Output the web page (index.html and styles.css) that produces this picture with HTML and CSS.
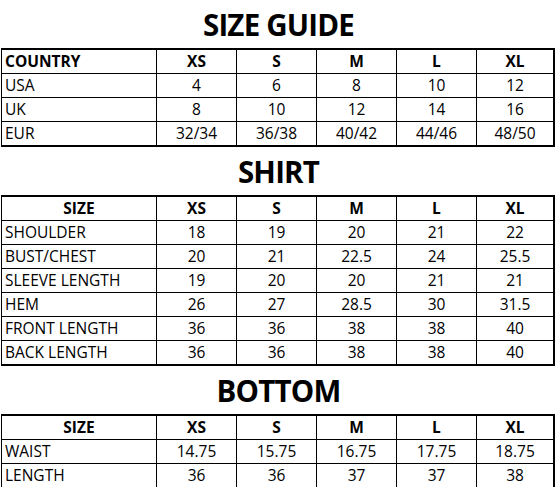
FILE: index.html
```html
<!DOCTYPE html>
<html lang="en">
<head>
<meta charset="utf-8">
<title>Size Guide</title>
<link rel="stylesheet" href="styles.css">
</head>
<body>
<main class="guide">
  <section class="block">
    <h2 class="title">SIZE GUIDE</h2>
    <div class="chart">
      <div class="c head first left">COUNTRY</div><div class="c head">XS</div><div class="c head">S</div><div class="c head">M</div><div class="c head">L</div><div class="c head">XL</div>
      <div class="c left">USA</div><div class="c">4</div><div class="c">6</div><div class="c">8</div><div class="c">10</div><div class="c">12</div>
      <div class="c left">UK</div><div class="c">8</div><div class="c">10</div><div class="c">12</div><div class="c">14</div><div class="c">16</div>
      <div class="c left">EUR</div><div class="c">32/34</div><div class="c">36/38</div><div class="c">40/42</div><div class="c">44/46</div><div class="c">48/50</div>
    </div>
  </section>
  <section class="block">
    <h2 class="title">SHIRT</h2>
    <div class="chart">
      <div class="c head">SIZE</div><div class="c head">XS</div><div class="c head">S</div><div class="c head">M</div><div class="c head">L</div><div class="c head">XL</div>
      <div class="c left">SHOULDER</div><div class="c">18</div><div class="c">19</div><div class="c">20</div><div class="c">21</div><div class="c">22</div>
      <div class="c left">BUST/CHEST</div><div class="c">20</div><div class="c">21</div><div class="c">22.5</div><div class="c">24</div><div class="c">25.5</div>
      <div class="c left">SLEEVE LENGTH</div><div class="c">19</div><div class="c">20</div><div class="c">20</div><div class="c">21</div><div class="c">21</div>
      <div class="c left">HEM</div><div class="c">26</div><div class="c">27</div><div class="c">28.5</div><div class="c">30</div><div class="c">31.5</div>
      <div class="c left">FRONT LENGTH</div><div class="c">36</div><div class="c">36</div><div class="c">38</div><div class="c">38</div><div class="c">40</div>
      <div class="c left">BACK LENGTH</div><div class="c">36</div><div class="c">36</div><div class="c">38</div><div class="c">38</div><div class="c">40</div>
    </div>
  </section>
  <section class="block">
    <h2 class="title">BOTTOM</h2>
    <div class="chart">
      <div class="c head">SIZE</div><div class="c head">XS</div><div class="c head">S</div><div class="c head">M</div><div class="c head">L</div><div class="c head">XL</div>
      <div class="c left">WAIST</div><div class="c">14.75</div><div class="c">15.75</div><div class="c">16.75</div><div class="c">17.75</div><div class="c">18.75</div>
      <div class="c left">LENGTH</div><div class="c">36</div><div class="c">36</div><div class="c">37</div><div class="c">37</div><div class="c">38</div>
    </div>
  </section>
</main>
</body>
</html>
```
FILE: styles.css
```css
html, body {
  margin: 0;
  padding: 0;
  background: #fff;
}

body {
  font-family: "Open Sans", "Noto Sans", sans-serif;
  color: #000;
  width: 557px;
}

.guide {
  display: flex;
  flex-direction: column;
}

.block {
  display: flex;
  flex-direction: column;
}

.title {
  margin: 0;
  box-sizing: border-box;
  height: 48px;
  padding-top: 5px;
  line-height: 40px;
  font-size: 29.5px;
  font-weight: 700;
  text-align: center;
  letter-spacing: -0.8px;
}

.chart {
  display: grid;
  grid-template-columns: 155px repeat(4, 80px) 76px;
  width: 554px;
  box-sizing: border-box;
  margin-left: 1px;
  border-top: 2px solid #000;
  border-bottom: 2px solid #000;
  border-left: 1px solid #000;
  border-right: 2px solid #000;
}

.c {
  box-sizing: border-box;
  height: 24px;
  line-height: 23px;
  font-size: 15.5px;
  text-align: center;
  white-space: nowrap;
  border-right: 1px solid #000;
  border-bottom: 1px solid #000;
}

.c:nth-child(6n) {
  border-right: 0;
}

.c:nth-last-child(-n+6) {
  border-bottom: 0;
  height: 23px;
}

.left {
  text-align: left;
  padding-left: 3px;
}

.head {
  font-weight: 700;
}
```
